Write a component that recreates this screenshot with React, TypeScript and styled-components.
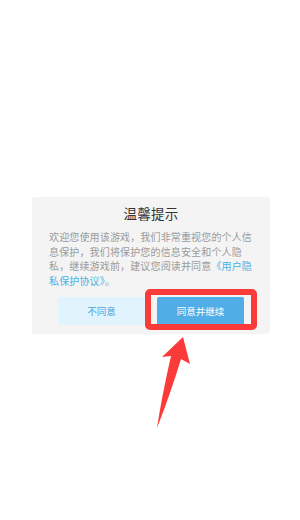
import styled, { createGlobalStyle } from "styled-components"

const GlobalStyle = createGlobalStyle`
	html, body {
		margin: 0;
		padding: 0;
		background: #fff;
	}
	body {
		font-family: "Noto Sans CJK SC", "Noto Sans", sans-serif;
	}
`

const Page = styled.div`
	position: relative;
	width: 300px;
	height: 520px;
	padding-top: 197px;
	box-sizing: border-box;
	background: #fff;
`

const Dialog = styled.div`
	position: relative;
	width: 238px;
	margin-left: 32px;
	box-sizing: border-box;
	padding: 6px 0 9px;
	background: #f4f4f4;
	border-radius: 3px;
	display: flex;
	flex-direction: column;
	align-items: center;
`

const Title = styled.div`
	font-size: 13.5px;
	line-height: 20px;
	color: #333;
	letter-spacing: 0.3px;
`

const Body = styled.p`
	margin: 7px 0 0;
	width: 206px;
	padding-left: 2px;
	font-size: 10px;
	line-height: 14.5px;
	letter-spacing: 0.15px;
	color: #9a9a9a;
	text-align: left;

	a {
		color: #4ab0e6;
		text-decoration: none;
	}
`

const Buttons = styled.div`
	display: flex;
	gap: 12px;
	margin-top: 9px;
`

const Btn = styled.div<{ $primary?: boolean }>`
	width: 87px;
	height: 28px;
	display: flex;
	align-items: center;
	justify-content: center;
	border-radius: 2px;
	font-size: 9.5px;
	background: ${p => p.$primary ? "#51ade5" : "#e1f3fc"};
	color: ${p => p.$primary ? "#fff" : "#4aa6de"};
`

const Highlight = styled.div`
	position: absolute;
	left: 113px;
	top: 92px;
	width: 112px;
	height: 41px;
	box-sizing: border-box;
	border: 6px solid #fb3a3a;
	border-radius: 5px;
`

const Arrow = styled.svg`
	position: absolute;
	left: 150px;
	top: 330px;
	width: 50px;
	height: 105px;
`

const App = () => {
	return (
		<>
			<GlobalStyle />
			<Page>
				<Dialog>
					<Title>温馨提示</Title>
					<Body>
						欢迎您使用该游戏，我们非常重视您的个人信息保护，我们将保护您的信息安全和个人隐私，继续游戏前，建议您阅读并同意<a>《用户隐私保护协议》</a>。
					</Body>
					<Buttons>
						<Btn>不同意</Btn>
						<Btn $primary>同意并继续</Btn>
					</Buttons>
					<Highlight />
				</Dialog>
				<Arrow viewBox="150 330 50 105">
					<path d="M183,337 L190,364 L181,359 Q170,395 157,428 Q162,395 171,356 L162,357 Z" fill="#fb3a3a" />
				</Arrow>
			</Page>
		</>
	)
}

export default App
